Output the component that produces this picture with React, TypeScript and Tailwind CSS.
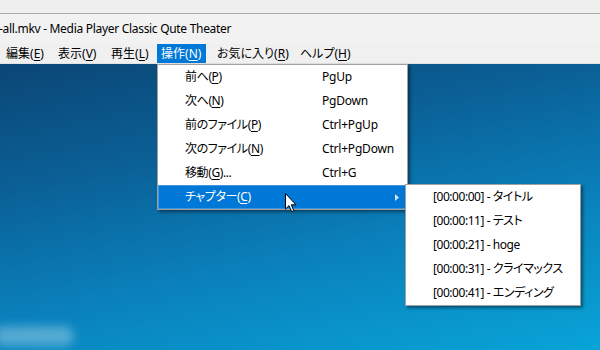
import React from "react";

const F = { fontFamily: '"Noto Sans", "Noto Sans CJK JP", sans-serif', fontFeatureSettings: '"palt"' };

function M({ pre, k, post = "" }: { pre: string; k: string; post?: string }) {
  return (
    <>
      {pre}(<span className="underline underline-offset-2">{k}</span>){post}
    </>
  );
}

const items: { pre: string; k: string; post?: string; sc: string }[] = [
  { pre: "前へ", k: "P", sc: "PgUp" },
  { pre: "次へ", k: "N", sc: "PgDown" },
  { pre: "前のファイル", k: "P", sc: "Ctrl+PgUp" },
  { pre: "次のファイル", k: "N", sc: "Ctrl+PgDown" },
  { pre: "移動", k: "G", post: "...", sc: "Ctrl+G" },
];

const chapters = [
  "[00:00:00] - タイトル",
  "[00:00:11] - テスト",
  "[00:00:21] - hoge",
  "[00:00:31] - クライマックス",
  "[00:00:41] - エンディング",
];

export default function App() {
  return (
    <div className="relative w-[600px] h-[350px] overflow-hidden flex flex-col bg-[#f0f0f0] text-black" style={F}>
      <div className="h-[14px] bg-[#efefef] border-b border-[#ababab]" />
      <div className="h-[30px] bg-[#f2f2f2] flex items-center text-[12px] leading-none tracking-[-0.3px] pb-[1px] whitespace-nowrap">
        <span className="-ml-[1px]">-all.mkv - Media Player Classic Qute Theater</span>
      </div>
      <div className="h-[20px] bg-[#f0f0f0] flex items-center text-[12px] leading-none border-b border-[#e3e3e3] whitespace-nowrap">
        <div className="w-[54px] pl-[6px] h-full flex items-center"><span><M pre="編集" k="E" /></span></div>
        <div className="w-[53px] pl-[4px] h-full flex items-center"><span><M pre="表示" k="V" /></span></div>
        <div className="w-[50px] pl-[4px] h-full flex items-center"><span><M pre="再生" k="L" /></span></div>
        <div className="w-[49px] pl-[4px] h-full flex items-center bg-[#0078d7] text-white"><span><M pre="操作" k="N" /></span></div>
        <div className="w-[90px] pl-[11px] h-full flex items-center"><span><M pre="お気に入り" k="R" /></span></div>
        <div className="pl-[4px] h-full flex items-center"><span><M pre="ヘルプ" k="H" /></span></div>
      </div>
      <div className="relative flex-1 bg-[linear-gradient(168deg,#0b4675_0%,#0a5f95_30%,#0a80bb_62%,#08a4d8_100%)]">
        <div className="absolute left-[-6px] top-[262px] w-[80px] h-[20px] rounded-full bg-white/30 blur-[5px]" />
      </div>

      {/* Dropdown */}
      <div className="absolute left-[157px] top-[64px] w-[251px] h-[146px] bg-white border border-[#a0a0a0] shadow-[2px_2px_3px_rgba(0,0,0,0.45)] text-[12px] leading-none whitespace-nowrap">
        {items.map((it, i) => (
          <div key={i} className="h-[24px] flex items-center">
            <span className="w-[164px] pl-[27px] tracking-[-0.4px]"><M pre={it.pre} k={it.k} post={it.post} /></span>
            <span className="tracking-[-0.2px]">{it.sc}</span>
          </div>
        ))}
        <div className="h-[24px] mr-[1px] flex items-center bg-[#0078d7] border border-[#3d95e0] text-white">
          <span className="pl-[26px] flex-1 tracking-[-0.4px]"><M pre="チャプター" k="C" /></span>
          <svg width="4" height="7" viewBox="0 0 4 7" className="mr-[6px]"><path d="M0 0 L4 3.5 L0 7 Z" fill="#cfe4f7" /></svg>
        </div>
      </div>

      {/* Submenu */}
      <div className="absolute left-[405px] top-[184px] w-[176px] h-[122px] bg-white border border-[#a0a0a0] shadow-[2px_2px_3px_rgba(0,0,0,0.45)] text-[12px] leading-none whitespace-nowrap">
        {chapters.map((c, i) => (
          <div key={i} className="h-[24px] flex items-center pl-[27px] tracking-[-0.45px]">{c}</div>
        ))}
      </div>

      {/* Cursor */}
      <svg className="absolute left-[285px] top-[193px]" width="13" height="20" viewBox="0 0 13 20">
        <path d="M0.5 0.5 L0.5 16 L4 12.6 L6.6 18.6 L8.8 17.7 L6.3 11.8 L11 11.8 Z" fill="#fff" stroke="#000" strokeWidth="1" strokeLinejoin="miter" />
      </svg>
    </div>
  );
}
